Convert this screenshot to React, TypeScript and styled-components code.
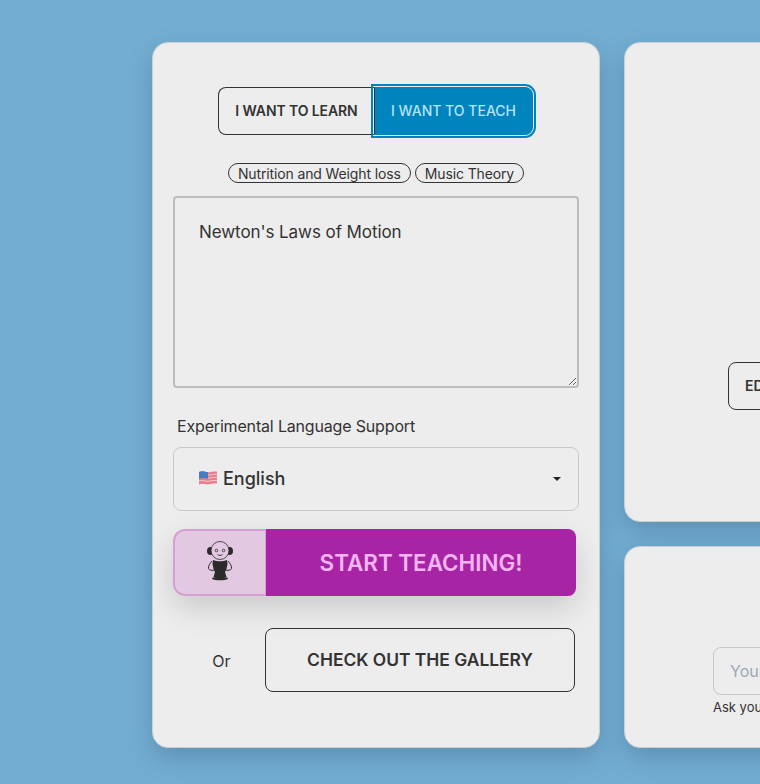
import React from "react";
import styled, { createGlobalStyle } from "styled-components";

const Global = createGlobalStyle`
  html, body { margin: 0; padding: 0; height: 784px; overflow: hidden; background: #73aed2; }
  body { font-family: Inter, "Liberation Sans", sans-serif; color: #333; }
  * { box-sizing: border-box; }
`;

const Page = styled.main`
  width: 760px;
  height: 784px;
  overflow: hidden;
  padding: 42px 0 0 152px;
  display: grid;
  grid-template-columns: 448px 448px;
  grid-template-rows: 480px 202px;
  column-gap: 24px;
  row-gap: 24px;
`;

const Card = styled.section`
  background: #ededed;
  border: 1px solid #c9cfd3;
  border-radius: 16px;
  box-shadow: 0 10px 24px rgba(30, 60, 90, 0.25);
`;

const MainCard = styled(Card)`
  grid-row: 1 / span 2;
  padding: 44px 20px 0;
  display: flex;
  flex-direction: column;
  align-items: stretch;
`;

const ModeRow = styled.div`
  display: flex;
  justify-content: center;
  padding-right: 1px;
`;

const ModeButton = styled.button<{ $active?: boolean }>`
  height: 48px;
  font: 600 14px/1 Inter, sans-serif;
  letter-spacing: -0.1px;
  padding: 0;
  cursor: pointer;
  ${(p) =>
    p.$active
      ? `
    width: 159px;
    background: #0084bd;
    color: #b6e2f8;
    font-weight: 500;
    letter-spacing: 0;
    border: 1px solid #0084bd;
    border-left-color: #333;
    border-radius: 0 8px 8px 0;
    outline: 2px solid #0084bd;
    outline-offset: 1px;
    position: relative;
  `
      : `
    width: 156px;
    background: transparent;
    color: #333;
    border: 1px solid #333;
    border-right: 0;
    border-radius: 8px 0 0 8px;
  `}
`;

const Chips = styled.div`
  display: flex;
  justify-content: center;
  gap: 4px;
  margin-top: 28px;
`;

const Chip = styled.span`
  height: 20px;
  padding: 0 9px;
  display: flex;
  align-items: center;
  font-size: 14px;
  letter-spacing: -0.13px;
  color: #333;
  border: 1px solid #333;
  border-radius: 10px;
`;

const Prompt = styled.textarea`
  display: block;
  margin-top: 13px;
  width: 406px;
  height: 192px;
  padding: 20px 24px;
  background: transparent;
  border: 2px solid #bdbdbd;
  border-radius: 4px;
  font: 400 17px/28px Inter, sans-serif;
  letter-spacing: -0.08px;
  color: #333;
  outline: none;
`;

const FieldLabel = styled.label`
  margin: 28px 0 0 4px;
  font-size: 16px;
  letter-spacing: -0.17px;
  line-height: 20px;
  color: #333;
`;

const SelectBox = styled.div`
  margin-top: 11px;
  width: 406px;
  height: 64px;
  border: 1px solid #c8c8c8;
  border-radius: 8px;
  padding: 0 17px 2px 24px;
  display: flex;
  align-items: center;
  gap: 5px;
  font-size: 18px;
  font-weight: 500;
  color: #333;
`;

const Caret = styled.span`
  margin: 2px 0 0 auto;
  width: 0;
  height: 0;
  border-left: 4px solid transparent;
  border-right: 4px solid transparent;
  border-top: 4px solid #222;
`;

const StartRow = styled.div`
  margin-top: 18px;
  width: 403px;
  height: 67px;
  display: flex;
  border-radius: 12px;
  box-shadow: 0 12px 30px rgba(0, 0, 0, 0.15);
`;

const MascotPane = styled.div`
  width: 93px;
  padding-bottom: 4px;
  background: #e2c8e0;
  border: 2px solid #d69fd3;
  border-right-width: 1px;
  border-radius: 12px 0 0 12px;
  display: flex;
  align-items: center;
  justify-content: center;
`;

const StartButton = styled.button`
  flex: 1;
  border: 0;
  background: #a725a5;
  color: #f5b4f2;
  font: 600 22.4px/1 Inter, sans-serif;
  border-radius: 0 8px 8px 0;
  padding: 2px 0 0;
`;

const GalleryRow = styled.div`
  margin-top: 32px;
  display: flex;
  align-items: center;
`;

const OrText = styled.span`
  width: 92px;
  padding: 2px 0 0 5px;
  text-align: center;
  font-size: 16px;
  color: #333;
`;

const OutlineButton = styled.button`
  width: 310px;
  height: 64px;
  background: transparent;
  border: 1px solid #333;
  border-radius: 8px;
  color: #333;
  font: 600 17.4px/1 Inter, sans-serif;
`;

const EditCard = styled(Card)`
  padding: 319px 0 0 103px;
`;

const EditButton = styled.button`
  width: 160px;
  height: 48px;
  padding: 0 0 0 16px;
  text-align: left;
  background: transparent;
  border: 1px solid #333;
  border-radius: 8px;
  color: #333;
  font: 600 14px/1 Inter, sans-serif;
  white-space: nowrap;
`;

const AskCard = styled(Card)`
  padding: 100px 0 0 88px;
`;

const AskInput = styled.input`
  display: block;
  width: 300px;
  height: 48px;
  padding: 0 16px;
  background: transparent;
  border: 1px solid #c8c8c8;
  border-radius: 8px;
  font: 400 16px Inter, sans-serif;
  &::placeholder { color: #a0a6b8; opacity: 1; }
`;

const Hint = styled.p`
  margin: 4px 0 0;
  font-size: 13px;
  line-height: 16px;
  color: #333;
  white-space: nowrap;
`;

const Flag = () => (
  <svg width="20" height="16" viewBox="0 0 20 16" aria-hidden="true">
    <path d="M1 2c4-1.800 7 .8 10 .2s5-1 8-.6v12c-3-.5-5 0-8 .7s-6-1.600-10 .2z" fill="#ea7c88" />
    <path d="M10 5c3 .4 5-1 9-.7M10 8c3 .4 5-1 9-.7M1 11c4-1.500 7 1 10 .3s5-1 8-.6" stroke="#f6d5da" strokeWidth="0.9" fill="none" />
    <path d="M1 2c3-1.400 5-.4 9 .3v6.500c-3-.6-6-1.400-9 .1z" fill="#4a7dc0" />
  </svg>
);

const Mascot = () => (
  <svg width="26" height="40" viewBox="0 0 26 40" aria-hidden="true">
    <ellipse cx="3.500" cy="10" rx="3.500" ry="4" fill="#2b2b2b" />
    <ellipse cx="22.500" cy="10" rx="3.500" ry="4" fill="#2b2b2b" />
    <circle cx="13" cy="9.500" r="9" fill="#e2c8e0" stroke="#2b2b2b" strokeWidth="0.8" />
    <circle cx="9.500" cy="9.500" r="1.300" fill="none" stroke="#2b2b2b" strokeWidth="0.8" />
    <circle cx="16.500" cy="9.500" r="1.300" fill="none" stroke="#2b2b2b" strokeWidth="0.8" />
    <path d="M10.500 13.500c1.300 1.200 3.700 1.200 5 0" fill="none" stroke="#2b2b2b" strokeWidth="0.9" />
    <path d="M5 20c-2 2-4 5.500-3.500 7.500.5 1.800 4 2.300 7 1.500M21 20c2 2 4 5.500 3.500 7.500-.5 1.800-4 2.300-7 1.500" fill="#e2c8e0" stroke="#2b2b2b" strokeWidth="1" />
    <path d="M6 19c4 1.800 10 1.800 14 0l.5 4-1 5-1.500 3 1.500 5h-13l1.500-5-1.500-3-1-5z" fill="#2b2b2b" />
    <ellipse cx="13" cy="37.500" rx="8" ry="1.800" fill="#2b2b2b" />
  </svg>
);

export default function App() {
  return (
    <>
      <Global />
      <Page>
        <MainCard>
          <ModeRow>
            <ModeButton>I WANT TO LEARN</ModeButton>
            <ModeButton $active>I WANT TO TEACH</ModeButton>
          </ModeRow>
          <Chips>
            <Chip>Nutrition and Weight loss</Chip>
            <Chip>Music Theory</Chip>
          </Chips>
          <Prompt defaultValue="Newton's Laws of Motion" />
          <FieldLabel>Experimental Language Support</FieldLabel>
          <SelectBox>
            <Flag />
            English
            <Caret />
          </SelectBox>
          <StartRow>
            <MascotPane>
              <Mascot />
            </MascotPane>
            <StartButton>START TEACHING!</StartButton>
          </StartRow>
          <GalleryRow>
            <OrText>Or</OrText>
            <OutlineButton>CHECK OUT THE GALLERY</OutlineButton>
          </GalleryRow>
        </MainCard>
        <EditCard>
          <EditButton>EDIT PROMPT</EditButton>
        </EditCard>
        <AskCard>
          <AskInput placeholder="Your question" />
          <Hint>Ask your question here</Hint>
        </AskCard>
      </Page>
    </>
  );
}
